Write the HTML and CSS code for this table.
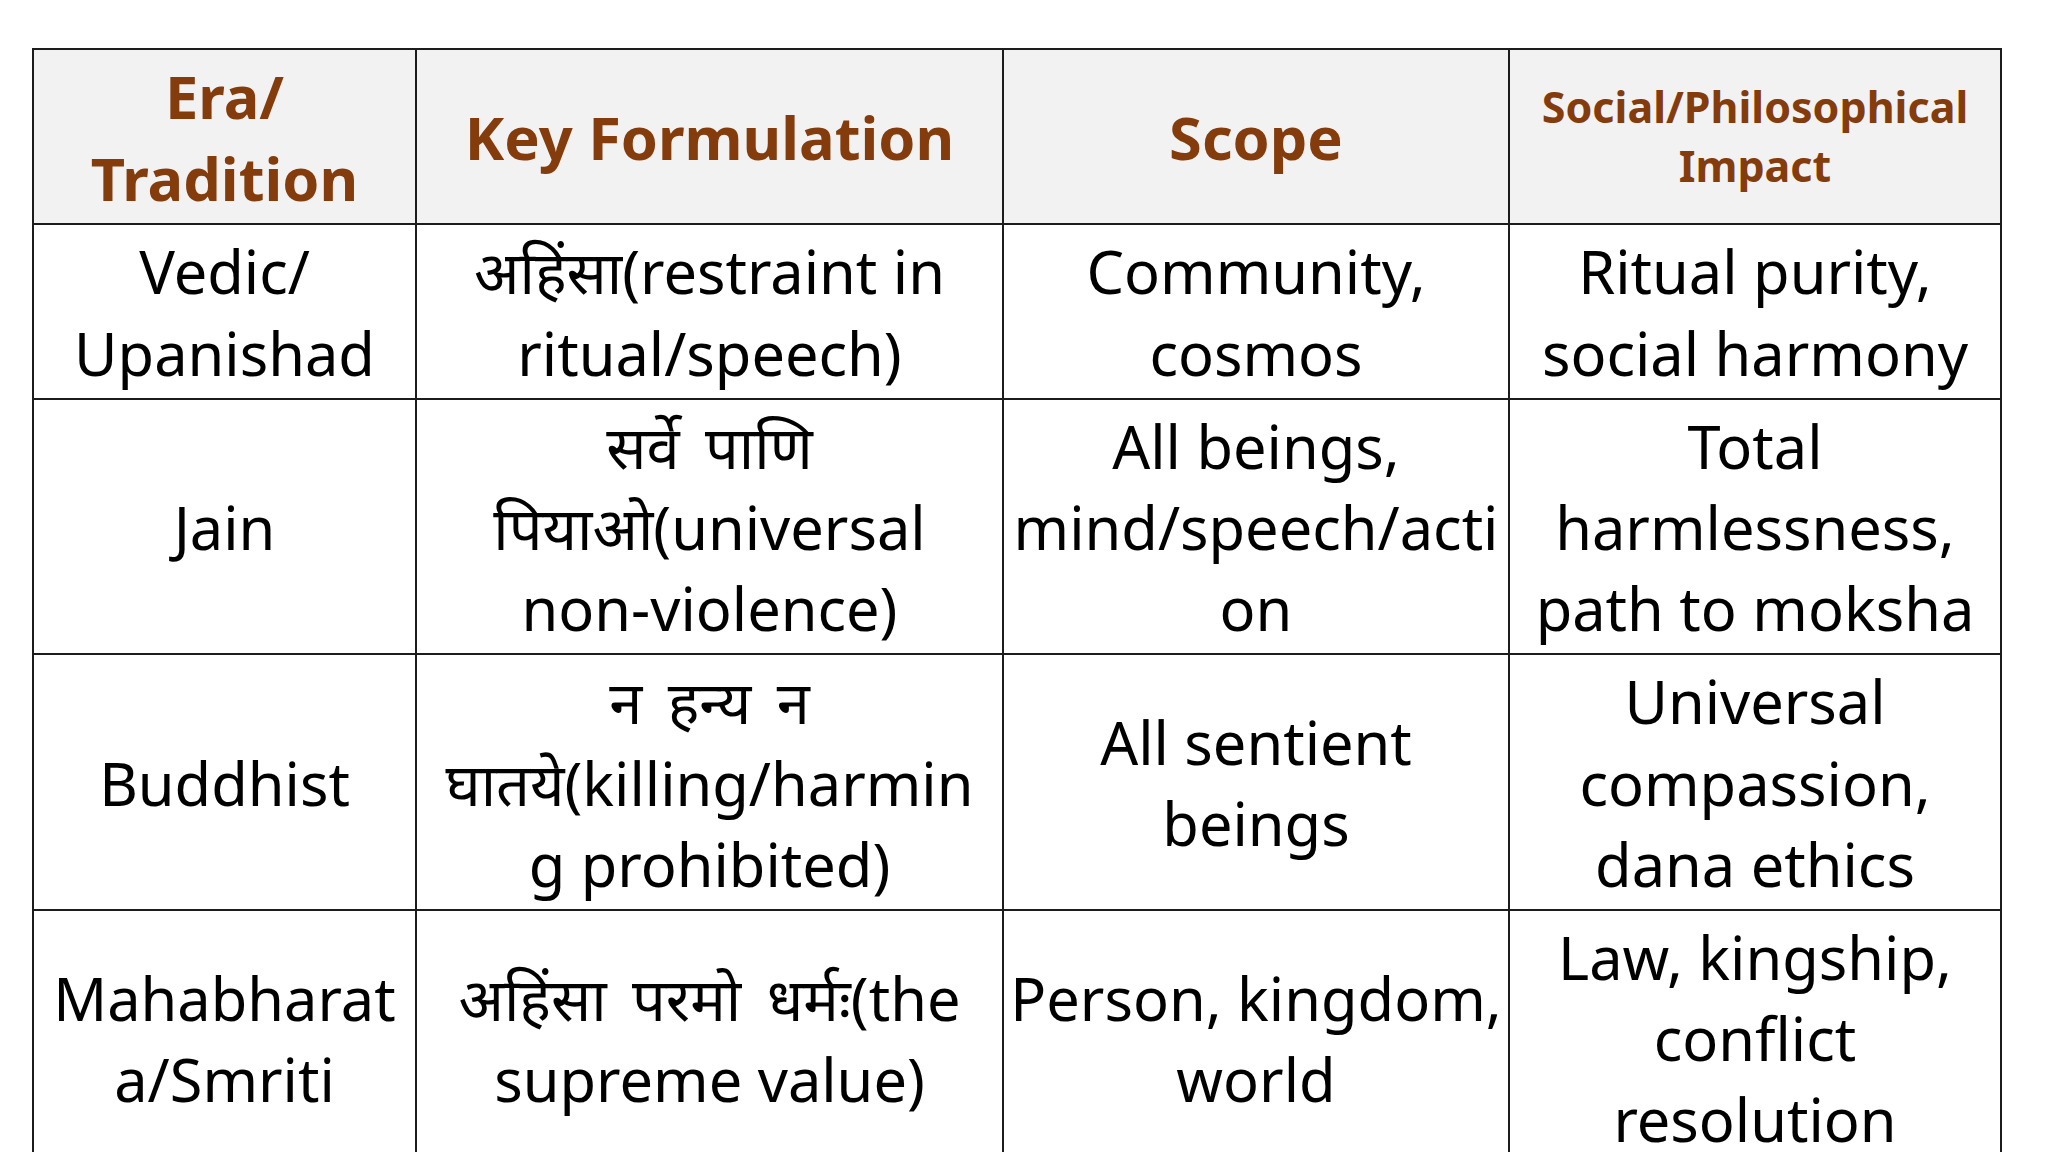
FILE: index.html
```html
<!DOCTYPE html>
<html lang="en">
<head>
<meta charset="utf-8">
<title>Ahimsa across traditions</title>
<link rel="stylesheet" href="styles.css">
</head>
<body>
<table class="grid">
  <colgroup>
    <col class="c1">
    <col class="c2">
    <col class="c3">
    <col class="c4">
  </colgroup>
  <thead>
    <tr>
      <th>Era/ Tradition</th>
      <th>Key Formulation</th>
      <th>Scope</th>
      <th class="small-head">Social/Philosophical Impact</th>
    </tr>
  </thead>
  <tbody>
    <tr>
      <td>Vedic/ Upanishad</td>
      <td class="formula"><span class="deva" lang="hi">अहिंसा</span>(restraint in ritual/speech)</td>
      <td class="scope">Community, cosmos</td>
      <td>Ritual purity, social harmony</td>
    </tr>
    <tr>
      <td>Jain</td>
      <td class="formula"><span class="deva" lang="hi">सर्वे पाणि पियाओ</span>(universal non-violence)</td>
      <td class="scope">All beings, mind/speech/action</td>
      <td>Total harmlessness, path to moksha</td>
    </tr>
    <tr>
      <td>Buddhist</td>
      <td class="formula"><span class="deva" lang="hi">न हन्य न घातये</span>(killing/harming prohibited)</td>
      <td class="scope">All sentient beings</td>
      <td>Universal compassion, dana ethics</td>
    </tr>
    <tr>
      <td>Mahabharata/Smriti</td>
      <td class="formula"><span class="deva" lang="hi">अहिंसा परमो धर्मः</span>(the supreme value)</td>
      <td class="scope">Person, kingdom, world</td>
      <td>Law, kingship, conflict resolution</td>
    </tr>
  </tbody>
</table>
</body>
</html>
```

FILE: styles.css
```css
html, body {
  margin: 0;
  padding: 0;
  background: #ffffff;
}

body {
  font-family: "Noto Sans", "Noto Sans Devanagari", "Lohit Devanagari", "FreeSans", "DejaVu Sans", sans-serif;
  color: #000000;
  overflow: hidden;
  height: 1152px;
}

.grid {
  border-collapse: collapse;
  table-layout: fixed;
  width: 1968px;
  margin: 48px 0 0 32px;
}

.c1 { width: 383px; }
.c2 { width: 587px; }
.c3 { width: 506px; }
.c4 { width: 492px; }

.grid th,
.grid td {
  border: 2px solid #1c1c1c;
  padding: 5px 7px;
  text-align: center;
  vertical-align: middle;
  font-size: 59.5px;
  line-height: 81.7px;
  overflow-wrap: anywhere;
  word-break: normal;
}

.grid th {
  background: #f2f2f2;
  color: #843c0c;
  font-weight: 700;
}

.grid th.small-head {
  font-size: 43px;
  line-height: 58.6px;
}

.grid td {
  font-weight: 400;
  color: #000000;
  line-height: 81.2px;
}

.grid td.formula {
  padding: 5px 12px;
}

.grid td.scope {
  padding: 5px 2px;
}

.deva {
  word-spacing: 10px;
}
```
